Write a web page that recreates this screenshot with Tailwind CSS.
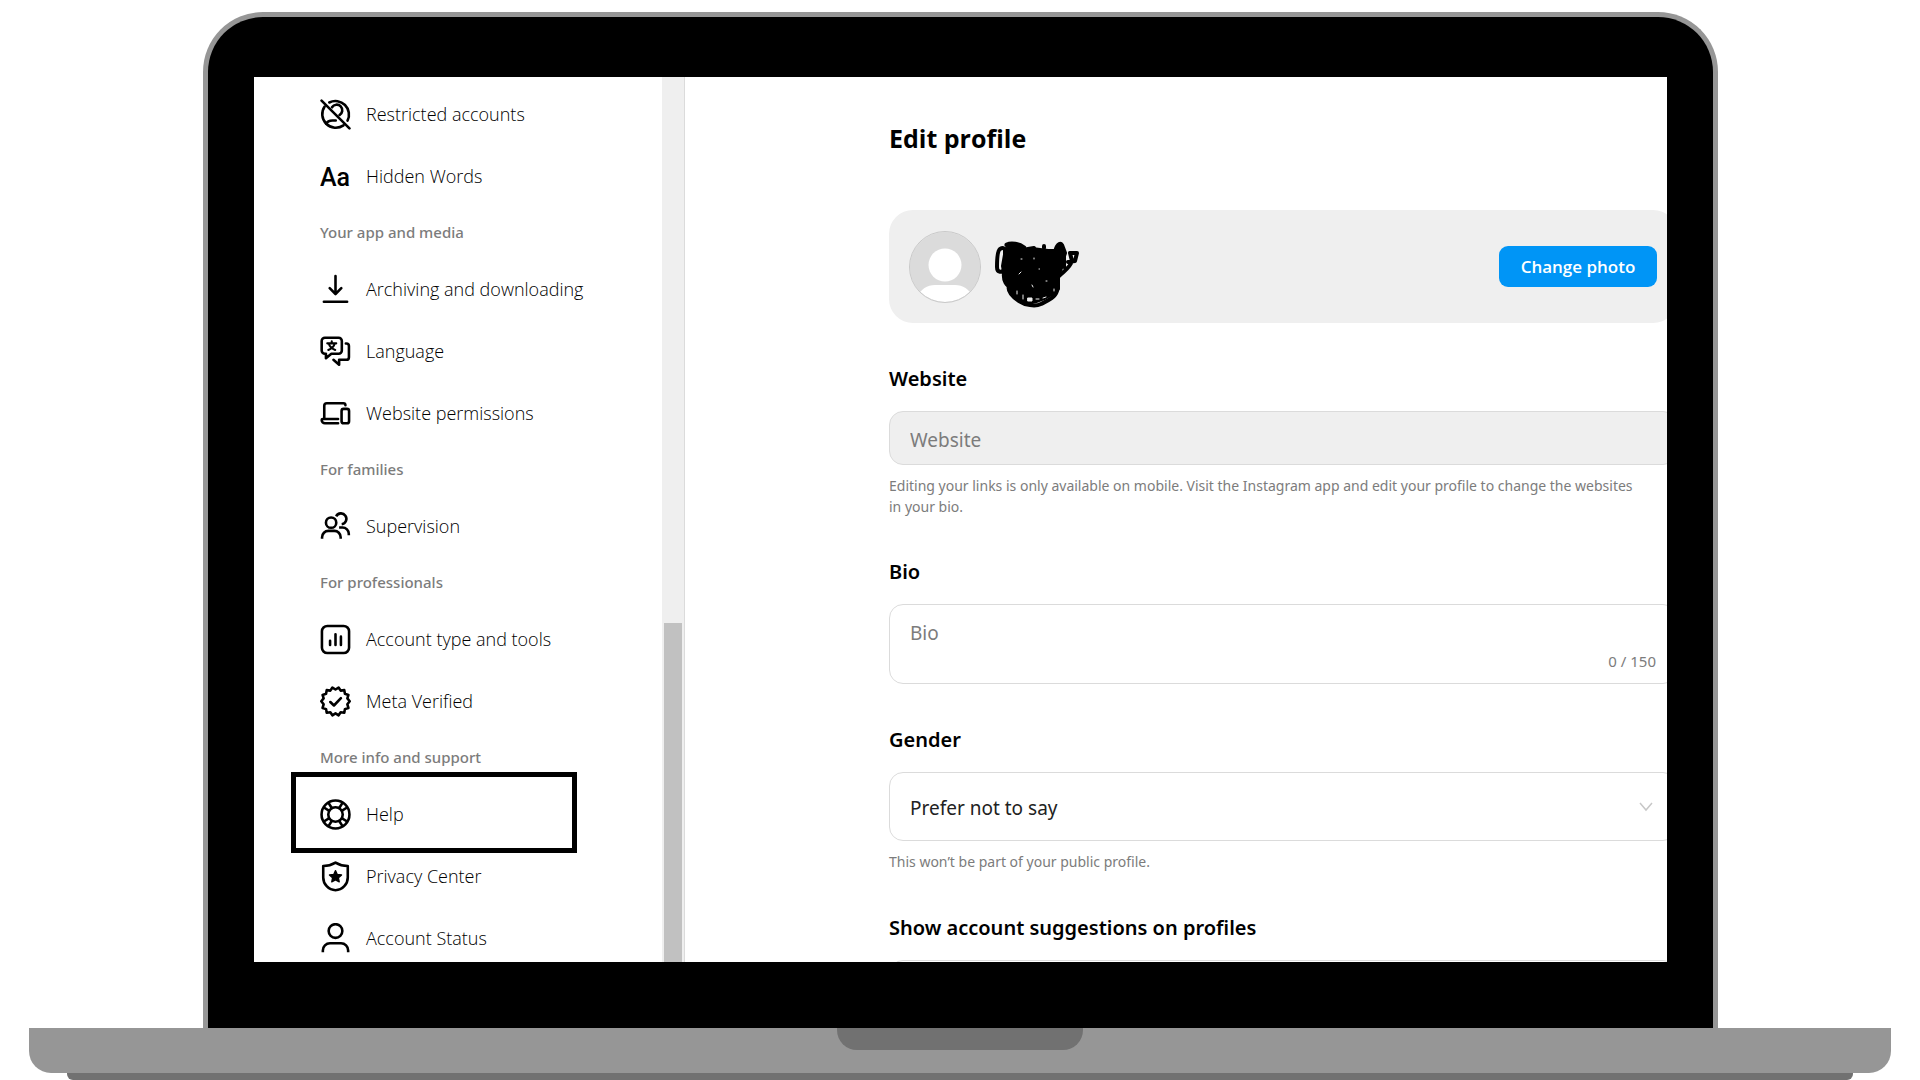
<!DOCTYPE html>
<html lang="en">
  <head>
    <title>Edit profile</title>
    <meta charset="UTF-8" />
    <meta name="viewport" content="width=device-width, initial-scale=1.0" />
    <script src="https://cdn.jsdelivr.net/npm/@tailwindcss/browser@4"></script>
  </head>
  <body class="bg-white font-['Noto_Sans',sans-serif] text-black">
    <div class="flex flex-col h-screen overflow-hidden pt-3">
      <!-- laptop lid -->
      <div class="flex flex-1 min-h-0 ml-[203px] mr-[202px] border-5 border-b-0 border-[#969696] rounded-t-[60px] bg-black px-[46px] pt-[60px] pb-[66px]">
        <div class="flex flex-1 min-w-0 overflow-hidden bg-white">
          <aside class="flex shrink-0 w-[431px] border-r border-[#dbdbdb]">
            <nav class="flex-1 pl-[66px] pt-[6px] font-['Open_Sans',sans-serif] text-lg font-light text-black">
              <a href="#" class="flex items-center gap-[15px] h-[62px]">
                <svg class="size-[31px]" viewBox="0 0 24 24" fill="none" stroke="#000" stroke-width="2" stroke-linecap="round">
                  <path d="M7.200 2.700A10.500 10.500 0 0 1 21.300 16.800M18.200 20.400A10.500 10.500 0 0 1 3.600 5.800" />
                  <path d="M9.300 6.400a4.300 4.300 0 1 1 5.800 6" />
                  <path d="M4.800 19.200c.8-1.800 2.500-2.600 4.800-2.600h2.600" />
                  <path d="M1.200 1.200 22.800 22.800" />
                </svg>
                Restricted accounts
              </a>
              <a href="#" class="flex items-center gap-[15px] h-[62px]">
                <svg class="size-[31px]" viewBox="0 0 31 31">
                  <text x="15" y="25" text-anchor="middle" class="font-['Roboto',sans-serif] text-[25px] font-medium">Aa</text>
                </svg>
                Hidden Words
              </a>
              <h4 class="flex items-center h-[51px] font-['Noto_Sans',sans-serif] text-[15px] font-medium text-[#7c7c7c]">Your app and media</h4>
              <a href="#" class="flex items-center gap-[15px] h-[62px]">
                <svg class="size-[31px]" viewBox="0 0 24 24" fill="none" stroke="#000" stroke-width="2" stroke-linecap="round" stroke-linejoin="round">
                  <path d="M12 1.500v13.800M7.500 11l4.500 4.500 4.500-4.500M3 21.500h18" />
                </svg>
                Archiving and downloading
              </a>
              <a href="#" class="flex items-center gap-[15px] h-[62px]">
                <svg class="size-[31px]" viewBox="0 0 24 24" fill="none" stroke="#000" stroke-width="2" stroke-linecap="round" stroke-linejoin="round">
                  <path d="M3.800 1.300h10.600a2.500 2.500 0 0 1 2.500 2.500v7.400a2.500 2.500 0 0 1-2.500 2.500H8.800L4.600 17.200V13.700H3.800a2.500 2.500 0 0 1-2.500-2.500V3.800a2.500 2.500 0 0 1 2.500-2.500Z" />
                  <path d="M20 5.800h.4a2 2 0 0 1 2 2v8.600a2 2 0 0 1-2 2h-5.600v3.900l-4.400-3.900" />
                  <path d="M5.600 5.700h7M9.100 4v1.700M6.400 10.800c2.800-1.200 4.600-3 5-5.100M11.800 10.800C9 9.600 7.200 7.800 6.800 5.700" stroke-width="1.600" />
                </svg>
                Language
              </a>
              <a href="#" class="flex items-center gap-[15px] h-[62px]">
                <svg class="size-[31px]" viewBox="0 0 24 24" fill="none" stroke="#000" stroke-width="2" stroke-linecap="round" stroke-linejoin="round">
                  <path d="M3.300 15.800V6a2 2 0 0 1 2-2h12.800a1.600 1.600 0 0 1 1.600 1.600M14 16.200H2.200a.9.9 0 0 0-.9.9 2.500 2.500 0 0 0 2.500 2.500H14" />
                  <rect x="16.700" y="8.400" width="5.800" height="11.200" rx="1.600" />
                </svg>
                Website permissions
              </a>
              <h4 class="flex items-center h-[51px] font-['Noto_Sans',sans-serif] text-[15px] font-medium text-[#7c7c7c]">For families</h4>
              <a href="#" class="flex items-center gap-[15px] h-[62px]">
                <svg class="size-[31px]" viewBox="0 0 24 24" fill="none" stroke="#000" stroke-width="2" stroke-linecap="butt">
                  <circle cx="8.600" cy="9" r="4" />
                  <path d="M1.600 21.500v-1.200a4.900 4.900 0 0 1 4.900-4.900h4.600a4.900 4.900 0 0 1 4.900 4.900v1.200" />
                  <path d="M12.500 4.100a4.200 4.200 0 1 1 4.300 6.100M14.800 12.800h2.600a4.900 4.900 0 0 1 4.900 4.900v1" />
                </svg>
                Supervision
              </a>
              <h4 class="flex items-center h-[51px] font-['Noto_Sans',sans-serif] text-[15px] font-medium text-[#7c7c7c]">For professionals</h4>
              <a href="#" class="flex items-center gap-[15px] h-[62px]">
                <svg class="size-[31px]" viewBox="0 0 24 24" fill="none" stroke="#000" stroke-width="2" stroke-linecap="round">
                  <rect x="1.500" y="1.500" width="21" height="21" rx="4.200" />
                  <path d="M7.800 13v3.200M12 8v8.200M16.200 9.800v6.400" />
                </svg>
                Account type and tools
              </a>
              <a href="#" class="flex items-center gap-[15px] h-[62px]">
                <svg class="size-[31px]" viewBox="0 0 24 24" fill="none" stroke="#000" stroke-width="2" stroke-linecap="round" stroke-linejoin="round">
                  <path d="M12 2.700 14.400 1.200 16 3.600 18.800 3.200 19.300 6 22 6.900 21.200 9.600 23 11.800 21.200 14.200 22 17 19.300 17.900 18.800 20.700 16 20.300 14.400 22.700 12 21.200 9.600 22.700 8 20.300 5.200 20.700 4.700 17.900 2 17 2.800 14.200 1 11.800 2.800 9.600 2 6.900 4.700 6 5.200 3.200 8 3.600 9.600 1.200Z" />
                  <path d="M8 12.400l2.800 2.700 5.400-5.700" />
                </svg>
                Meta Verified
              </a>
              <h4 class="flex items-center h-[51px] font-['Noto_Sans',sans-serif] text-[15px] font-medium text-[#7c7c7c]">More info and support</h4>
              <a href="#" class="relative flex items-center gap-[15px] h-[62px]">
                <!-- highlight frame -->
                <span class="absolute -top-[11px] -bottom-2 -left-[29px] w-[286px] border-5 border-black"></span>
                <svg class="size-[31px]" viewBox="0 0 24 24" fill="none" stroke="#000" stroke-width="2">
                  <circle cx="12" cy="12" r="10.800" />
                  <circle cx="12" cy="12" r="5.600" />
                  <path d="M9.200 7.200 6.600 3M7.200 9.200 3 6.600M14.800 7.200 17.400 3M16.800 9.200 21 6.600M9.200 16.800 6.600 21M7.200 14.800 3 17.400M14.800 16.800 17.400 21M16.800 14.800 21 17.400" />
                </svg>
                Help
              </a>
              <a href="#" class="flex items-center gap-[15px] h-[62px]">
                <svg class="size-[31px]" viewBox="0 0 24 24" fill="none" stroke="#000" stroke-width="2" stroke-linejoin="round">
                  <path d="M12 1.200c2.800 1.700 6 2.600 9.500 2.700v8.800c0 5-4 9.900-9.500 9.900s-9.500-4.900-9.500-9.900V3.900c3.500-.1 6.700-1 9.500-2.700Z" />
                  <path d="m12 7.400 1.400 3 3.300.4-2.400 2.200.6 3.200L12 14.600l-2.900 1.600.6-3.200-2.400-2.200 3.300-.4Z" fill="#000" stroke-width="1" />
                </svg>
                Privacy Center
              </a>
              <a href="#" class="flex items-center gap-[15px] h-[62px]">
                <svg class="size-[31px]" viewBox="0 0 24 24" fill="none" stroke="#000" stroke-width="2">
                  <circle cx="12" cy="6.200" r="5.300" />
                  <path d="M2.200 22.600v-1.400a5.500 5.500 0 0 1 5.500-5.500h8.600a5.500 5.500 0 0 1 5.500 5.500v1.400" />
                </svg>
                Account Status
              </a>
            </nav>
            <!-- scrollbar -->
            <div class="flex items-end w-[22px] px-[2px] bg-[#efefef]">
              <div class="w-full h-[339px] bg-[#c1c1c1]"></div>
            </div>
          </aside>

          <main class="flex-1 min-w-0 pl-[204px] -mr-[10px]">
            <h1 class="mt-[45px] font-['Open_Sans',sans-serif] text-[25px] leading-8 font-bold">Edit profile</h1>
            <div class="flex items-center mt-[56px] h-[113px] rounded-3xl bg-[#efefef] px-5">
              <svg class="size-[72px]" viewBox="0 0 72 72">
                <clipPath id="avatar"><circle cx="36" cy="36" r="35" /></clipPath>
                <circle cx="36" cy="36" r="35" fill="#dbdbdb" />
                <g clip-path="url(#avatar)" fill="#fff">
                  <circle cx="36" cy="34" r="16.500" />
                  <path d="M8 66c4-8 10-12 18-12h20c8 0 14 4 18 12v6H8Z" />
                </g>
                <circle cx="36" cy="36" r="35.500" fill="none" stroke="#c8c8c8" />
              </svg>
              <svg class="w-[86px] h-[68px] ml-[14px] mt-4" viewBox="0 0 86 68" fill="none" stroke="#000" stroke-linecap="round" stroke-linejoin="round">
                <path d="M11 8c3 0 7 1 10 2l16-2 16 2 8 0 6 3-1 14-3 8v13c-8 7-18 12-30 14-7-1-13-6-17-13l-6-12-2-12Z" fill="#000" stroke-width="4" />
                <path d="M12 4c4-2 12-1 17 3M14 5l12 5" stroke-width="5" />
                <path d="M5 8c-3 2-3 12-3 18 0 6 5 6 8 2V10c0-3-3-4-5-2Z" stroke-width="4" />
                <path d="M9 32c-1 8 3 13 6 13M14 44c-2 6 4 12 10 16s16 6 22 3 14-6 16-13V33M33 8l6-1M49 7V5" stroke-width="4" />
                <path d="M60 12c1-8 5-11 7-8l3 8-2 6-6-2Z" fill="#000" stroke-width="4" />
                <path d="M64 35c5-5 11-8 13-15l-2-8 7 0-2 8-7 1M69 12v14" stroke-width="4" />
                <path d="M22 50v3M28 54v4M41 58h3M48 57l3-1M59 48v2M37 44l1 2M44 28h.5M24 33l2-2M51 40h1M26 18h1M39 17v1" stroke="#efefef" stroke-width="1" />
                <path d="M33 57h4v3h-4Z" fill="#efefef" stroke="#efefef" stroke-width="1" />
              </svg>
              <button type="button" class="ml-auto h-[41px] w-[158px] rounded-[9px] bg-[#0095f6] font-['Open_Sans',sans-serif] text-[17px] font-semibold text-white">Change photo</button>
            </div>

            <label for="website" class="block mt-[44px] text-xl leading-6 font-semibold">Website</label>
            <input id="website" type="text" disabled placeholder="Website" class="block mt-5 w-full h-[54px] rounded-[14px] border border-[#dbdbdb] bg-[#efefef] px-5 pt-1 text-[19px] placeholder:text-[#7c7c7c]">
            <p class="mt-[10px] max-w-[750px] text-sm leading-[21px] text-[#7c7c7c]">Editing your links is only available on mobile. Visit the Instagram app and edit your profile to change the websites in your bio.</p>

            <label for="bio" class="block mt-[43px] text-xl leading-6 font-semibold">Bio</label>
            <div class="relative mt-5">
              <textarea id="bio" placeholder="Bio" class="block w-full h-[80px] resize-none rounded-[14px] border border-[#dbdbdb] px-5 py-4 text-[19px] leading-6 placeholder:text-[#7c7c7c]"></textarea>
              <span class="absolute right-[21px] bottom-[13px] text-[15px] leading-5 text-[#7c7c7c]">0 / 150</span>
            </div>

            <label for="gender" class="block mt-[44px] text-xl leading-6 font-semibold">Gender</label>
            <div class="relative mt-5">
              <select id="gender" class="block w-full h-[69px] appearance-none rounded-[14px] border border-[#dbdbdb] px-5 pt-1 text-[19px] text-[#222]">
                <option>Prefer not to say</option>
              </select>
              <svg class="absolute right-[23px] top-[27px] size-4" viewBox="0 0 16 16" fill="none" stroke="#c7c7c7" stroke-width="1.500"><path d="m2 4 6 7 6-7" /></svg>
            </div>
            <p class="mt-[10px] text-sm leading-[21px] text-[#7c7c7c]">This won’t be part of your public profile.</p>

            <h2 class="mt-[44px] text-xl leading-6 font-semibold">Show account suggestions on profiles</h2>
            <div class="mt-5 h-20 rounded-[14px] border border-[#dbdbdb]"></div>
          </main>
        </div>
      </div>

      <!-- laptop base -->
      <div class="flex justify-center items-start shrink-0 h-[45px] mx-[29px] rounded-b-[22px] bg-[#969696]">
        <div class="w-[246px] h-[22px] rounded-b-[20px] bg-[#717171]"></div>
      </div>
      <div class="shrink-0 h-[7px] mx-[67px] rounded-b-md bg-[#717171]"></div>
    </div>
  </body>
</html>
